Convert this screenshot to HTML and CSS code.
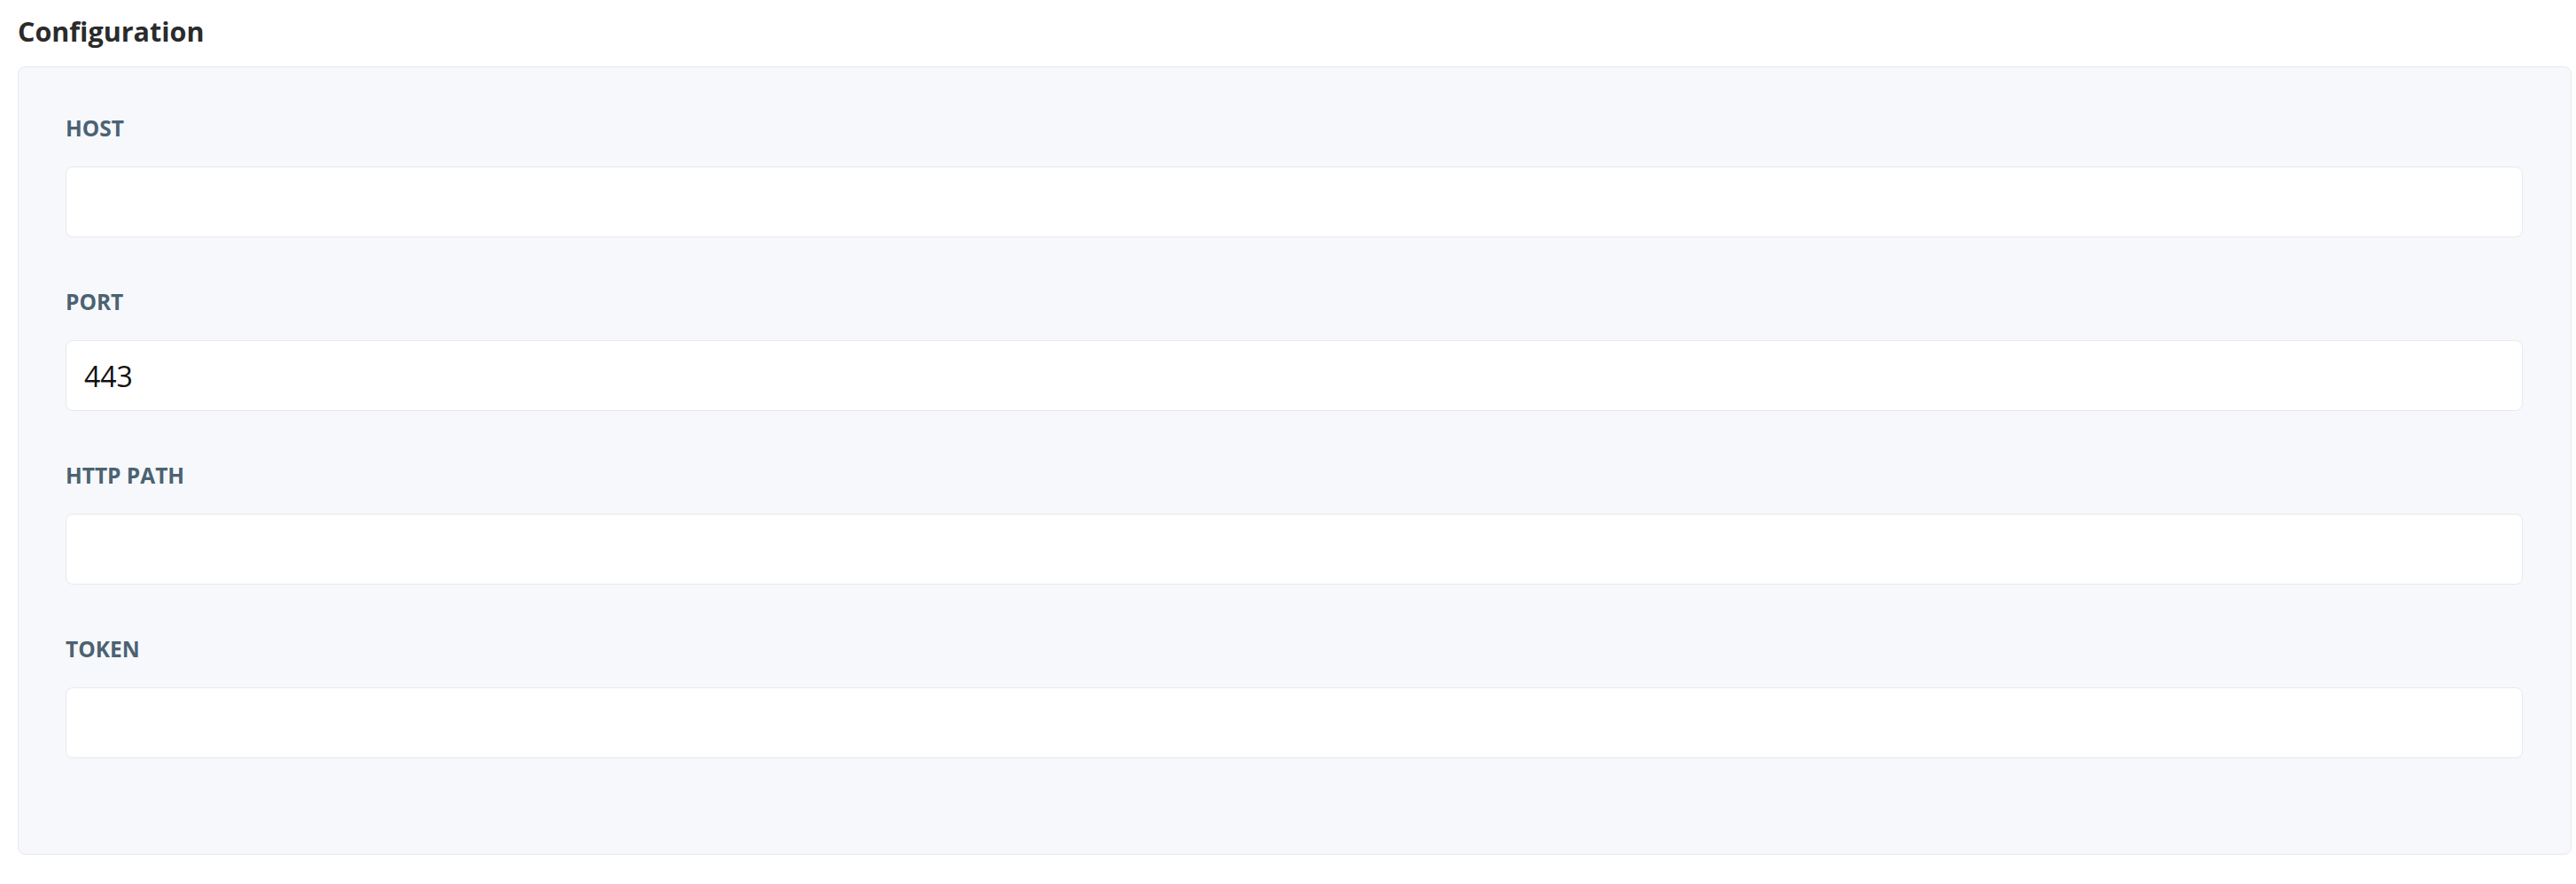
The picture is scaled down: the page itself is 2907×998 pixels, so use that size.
FILE: index.html
```html
<!DOCTYPE html>
<html lang="en">
<head>
    <meta charset="UTF-8">
    <meta name="viewport" content="width=device-width, initial-scale=1.0">
    <title>Configuration</title>
    <link rel="stylesheet" href="styles.css">
</head>
<body>
    <h2 class="section-title">Configuration</h2>
    <div class="config-box">
        <form class="config-form">
            <div class="field">
                <label for="host">HOST</label>
                <input type="text" id="host" name="host">
            </div>
            <div class="field">
                <label for="port">PORT</label>
                <input type="text" id="port" name="port" value="443">
            </div>
            <div class="field">
                <label for="http-path">HTTP PATH</label>
                <input type="text" id="http-path" name="http_path">
            </div>
            <div class="field">
                <label for="token">TOKEN</label>
                <input type="password" id="token" name="token">
            </div>
        </form>
    </div>
</body>
</html>
```

FILE: styles.css
```css
/* 전체 페이지 */
body {
    margin: 0;
    padding: 0 5px 0 20px;
    background-color: #ffffff;
    font-family: "Open Sans", "Noto Sans", sans-serif;
}

.section-title {
    margin: 0;
    padding-top: 12px;
    font-size: 30.5px;
    line-height: 46px;
    font-weight: 700;
    color: #2b2b2b;
    margin-bottom: 17px;
}

/* 설정 박스 */
.config-box {
    background: #f7f8fb;
    border: 1px solid #e6e9ee;
    border-radius: 8px;
    padding: 51px 54px 108px 53px;
}

.config-form {
    display: grid;
    gap: 55px;
}

.field label {
    display: block;
    font-size: 24.5px;
    line-height: 36px;
    font-weight: 700;
    color: #4b6272;
    margin-bottom: 25px;
}

.field input {
    display: block;
    box-sizing: border-box;
    width: 100%;
    height: 80px;
    padding: 0 20px;
    background: #ffffff;
    border: 1px solid #e6e9ee;
    border-radius: 8px;
    font-family: "Open Sans", "Noto Sans", sans-serif;
    font-size: 32px;
    color: #111111;
    outline: none;
}
```
